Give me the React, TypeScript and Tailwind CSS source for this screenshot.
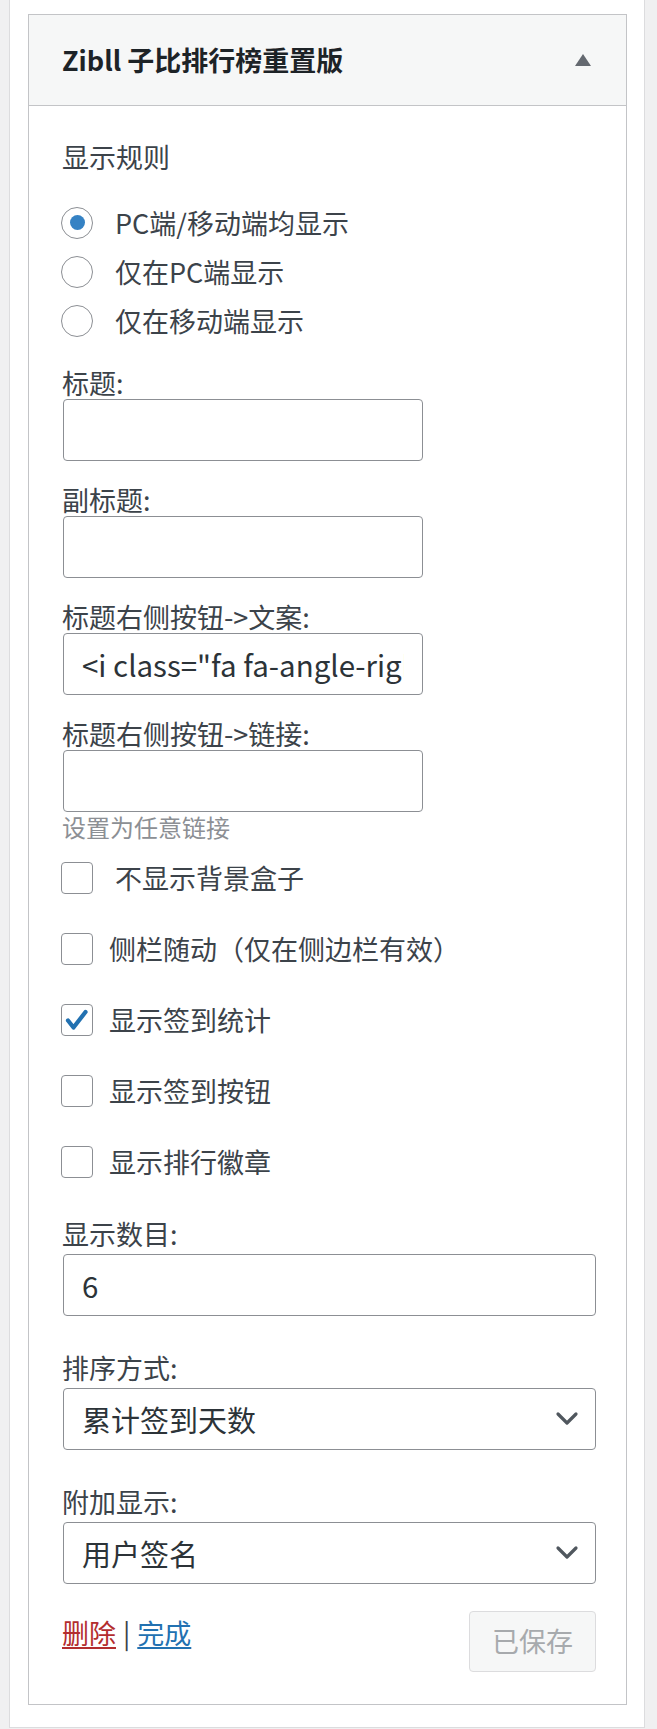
import React from "react";

const Radio = ({ checked, label }: { checked?: boolean; label: string }) => {
  return (
    <div className="flex items-center h-[49px]">
      <span className="-ml-px flex items-center justify-center w-[32px] h-[32px] rounded-full border border-[#8c8f94] bg-white shrink-0">
        {checked && <span className="w-[15px] h-[15px] rounded-full bg-[#3582c4]"></span>}
      </span>
      <span className="ml-[22px] leading-[36px]">{label}</span>
    </div>
  );
};

const Checkbox = ({ checked, label, gap }: { checked?: boolean; label: string; gap: string }) => {
  return (
    <div className="flex items-center h-[48px]">
      <span className="-ml-px flex items-center justify-center w-[32px] h-[32px] rounded-[4px] border border-[#8c8f94] bg-white shrink-0">
        {checked && (
          <svg width="24" height="24" viewBox="0 0 24 24">
            <path d="M3 12.5 L8.5 19.5 L20.5 4" fill="none" stroke="#2271b1" strokeWidth="4.2" strokeLinecap="round" strokeLinejoin="round" />
          </svg>
        )}
      </span>
      <span className={gap + " leading-[36px]"}>{label}</span>
    </div>
  );
};

const Chevron = () => (
  <svg width="24" height="16" viewBox="0 0 24 16" className="shrink-0">
    <polyline points="3,3 12,12 21,3" fill="none" stroke="#50575e" strokeWidth="3.2" strokeLinecap="round" strokeLinejoin="round" />
  </svg>
);

const SelectBox = ({ value }: { value: string }) => (
  <div className="ml-px mt-[4px] flex items-center justify-between w-[533px] h-[62px] rounded-[4px] border border-[#8c8f94] bg-white pl-[18px] pr-[16px] text-[29px] text-[#2c3338]">
    <span className="leading-[38px]">{value}</span>
    <Chevron />
  </div>
);

const inputCls =
  "ml-px h-[62px] rounded-[4px] border border-[#8c8f94] bg-white px-[18px] text-[29.5px] text-[#2c3338] outline-none";

const App = () => {
  return (
    <div className="min-h-screen bg-[#f0f0f1] font-['Noto_Sans_CJK_SC','Noto_Sans',sans-serif] text-[27px] text-[#3c434a]">
      <div className="ml-[9px] w-[636px] bg-white border-x border-b border-[#dcdcde] pl-[18px] pr-[17px] pt-[14px] pb-[22px]">
        <div className="border border-[#c3c4c7] bg-white">
          <div className="flex items-center justify-between h-[91px] bg-[#f6f7f7] border-b border-[#c3c4c7] pl-[33px] pr-[35px]">
            <p className="font-semibold text-[#1d2327] leading-[36px]">Zibll 子比排行榜重置版</p>
            <svg width="16" height="12" viewBox="0 0 16 12">
              <polygon points="8,0 16,12 0,12" fill="#646970" />
            </svg>
          </div>

          <div className="flex flex-col pl-[33px] pr-[30px] pt-[33px] pb-[32px]">
            <p className="leading-[36px]">显示规则</p>
            <div className="mt-[23px] flex flex-col">
              <Radio checked label="PC端/移动端均显示" />
              <Radio label="仅在PC端显示" />
              <Radio label="仅在移动端显示" />
            </div>

            <p className="mt-[22px] leading-[32px]">标题:</p>
            <input readOnly value="" className={inputCls + " w-[360px]"} />

            <p className="mt-[23px] leading-[32px]">副标题:</p>
            <input readOnly value="" className={inputCls + " w-[360px]"} />

            <p className="mt-[23px] leading-[32px]">标题右侧按钮-&gt;文案:</p>
            <input readOnly value={'<i class="fa fa-angle-right"></i>'} className={inputCls + " w-[360px]"} />

            <p className="mt-[23px] leading-[32px]">标题右侧按钮-&gt;链接:</p>
            <input readOnly value="" className={inputCls + " w-[360px]"} />
            <p className="text-[24px] leading-[30px] text-[#8c8f94]">设置为任意链接</p>

            <div className="mt-[12px] flex flex-col gap-[23px]">
              <Checkbox label="不显示背景盒子" gap="ml-[22px]" />
              <Checkbox label="侧栏随动（仅在侧边栏有效）" gap="ml-[16px]" />
              <Checkbox checked label="显示签到统计" gap="ml-[16px]" />
              <Checkbox label="显示签到按钮" gap="ml-[16px]" />
              <Checkbox label="显示排行徽章" gap="ml-[16px]" />
            </div>

            <p className="mt-[32px] leading-[32px]">显示数目:</p>
            <input readOnly value="6" className={inputCls + " mt-[4px] w-[533px]"} />

            <p className="mt-[36px] leading-[32px]">排序方式:</p>
            <SelectBox value="累计签到天数" />

            <p className="mt-[36px] leading-[32px]">附加显示:</p>
            <SelectBox value="用户签名" />

            <div className="mt-[27px] flex items-start justify-between">
              <div className="mt-[6px] flex items-center leading-[32px]">
                <a className="text-[#b32d2e] underline underline-offset-[3px]">删除</a>
                <span className="mx-[7px] text-[#3c434a]">|</span>
                <a className="text-[#2271b1] underline underline-offset-[3px]">完成</a>
              </div>
              <button className="w-[127px] h-[61px] rounded-[4px] border border-[#dcdcde] bg-[#f6f7f7] text-[#a7aaad]">
                已保存
              </button>
            </div>
          </div>
        </div>
      </div>
    </div>
  );
};

export default App;
